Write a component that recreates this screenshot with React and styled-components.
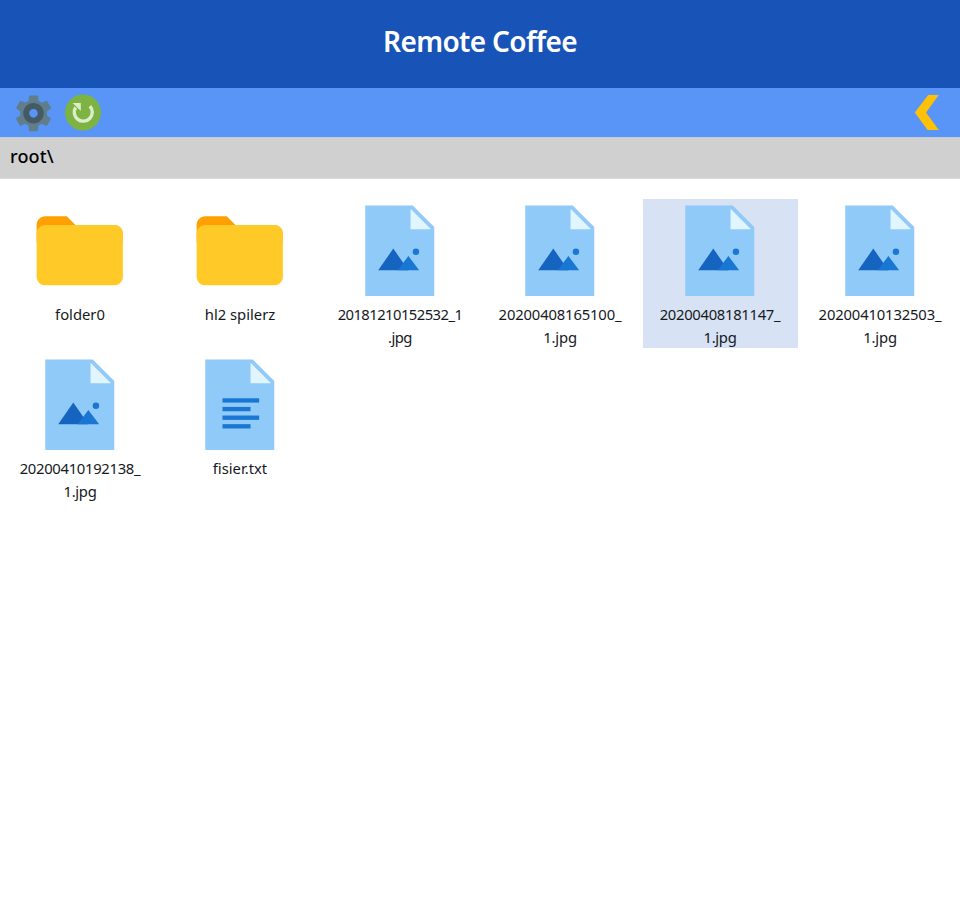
import React from "react";
import styled, { createGlobalStyle, css } from "styled-components";
import { FcFolder, FcImageFile, FcDocument, FcSettings } from "react-icons/fc";

const GlobalStyle = createGlobalStyle`
  * { box-sizing: border-box; }
  body {
    margin: 0;
    background: #fff;
    color: #212529;
    font-family: "Segoe UI", "Noto Sans", sans-serif;
  }
`;

const Page = styled.div`
  display: flex;
  flex-direction: column;
  min-height: 100vh;
`;

const Header = styled.header`
  display: flex;
  justify-content: center;
  height: 88px;
  padding-top: 21px;
  background: #1854b7;
`;

const Title = styled.h1`
  margin: 0;
  color: #fff;
  font-size: 28px;
  line-height: 41px;
  font-weight: 600;
  letter-spacing: -0.65px;
`;

const Toolbar = styled.nav`
  display: flex;
  align-items: center;
  gap: 10px;
  height: 49px;
  padding: 0 13px;
  background: #5995f7;
`;

const ToolButton = styled.button`
  display: flex;
  align-items: center;
  justify-content: center;
  width: 40px;
  height: 40px;
  padding: 0;
  border: 0;
  background: none;
  margin-left: ${(p) => (p.$end ? "auto" : 0)};
  svg { flex: none; }
`;

const PathBar = styled.div`
  height: 42px;
  padding: 0 10px;
  border-top: 1px solid #c4c9d3;
  border-bottom: 1px solid #dadada;
  background: #d0d0d0;
  color: #000;
  font-size: 18px;
  font-weight: 500;
  line-height: 37px;
  letter-spacing: 0.15px;
`;

const FileGrid = styled.main`
  display: grid;
  grid-template-columns: repeat(6, 155px);
  column-gap: 5px;
  row-gap: 5px;
  padding: 20px 2px 20px 3px;
  align-items: start;
`;

const FileItem = styled.div`
  display: flex;
  flex-direction: column;
  align-items: center;
  height: 149px;
  padding-right: 1px;
  ${(p) => p.$selected && css`background: #d7e2f4;`}
  svg {
    flex: none;
    margin: 0 0.5px 0.5px 0;
  }
`;

const FileName = styled.div`
  color: #16191d;
  font-size: 14.8px;
  line-height: 23px;
  letter-spacing: ${(p) => p.$spacing || 0}px;
  text-align: center;
  white-space: pre-line;
`;

const RefreshIcon = () => (
  <svg width="40" height="40" viewBox="0 0.5 40 40" fill="none">
    <circle cx="20" cy="20" r="18" fill="#7cb342" />
    <path d="M26.9 13.6A9 9 0 1 1 12.6 14.9" stroke="#dcedc8" strokeWidth="3.4" />
    <path d="M9.6 10.4H17.8V18.6Z" fill="#dcedc8" />
  </svg>
);

const BackIcon = () => (
  <svg width="40" height="40" viewBox="0 0.5 40 40">
    <path d="M31.8 2.6H21.2L7.8 20 20.6 37.4H31.8L19 20Z" fill="#ffc107" />
  </svg>
);

const icons = { folder: FcFolder, image: FcImageFile, text: FcDocument };

const files = [
  { type: "folder", name: "folder0" },
  { type: "folder", name: "hl2 spilerz" },
  { type: "image", name: "20181210152532_1\n.jpg", spacing: -0.55 },
  { type: "image", name: "20200408165100_\n1.jpg", spacing: -0.15 },
  { type: "image", name: "20200408181147_\n1.jpg", spacing: -0.3, selected: true },
  { type: "image", name: "20200410132503_\n1.jpg", spacing: -0.15 },
  { type: "image", name: "20200410192138_\n1.jpg", spacing: -0.3 },
  { type: "text", name: "fisier.txt" },
];

export default function App() {
  return (
    <Page>
      <GlobalStyle />
      <Header>
        <Title>Remote Coffee</Title>
      </Header>
      <Toolbar>
        <ToolButton aria-label="Settings"><FcSettings size={41} /></ToolButton>
        <ToolButton aria-label="Refresh"><RefreshIcon /></ToolButton>
        <ToolButton aria-label="Back" $end><BackIcon /></ToolButton>
      </Toolbar>
      <PathBar>root\</PathBar>
      <FileGrid>
        {files.map((file) => {
          const Icon = icons[file.type];
          return (
            <FileItem key={file.name} $selected={file.selected}>
              <Icon size={103.5} />
              <FileName $spacing={file.spacing}>{file.name}</FileName>
            </FileItem>
          );
        })}
      </FileGrid>
    </Page>
  );
}
